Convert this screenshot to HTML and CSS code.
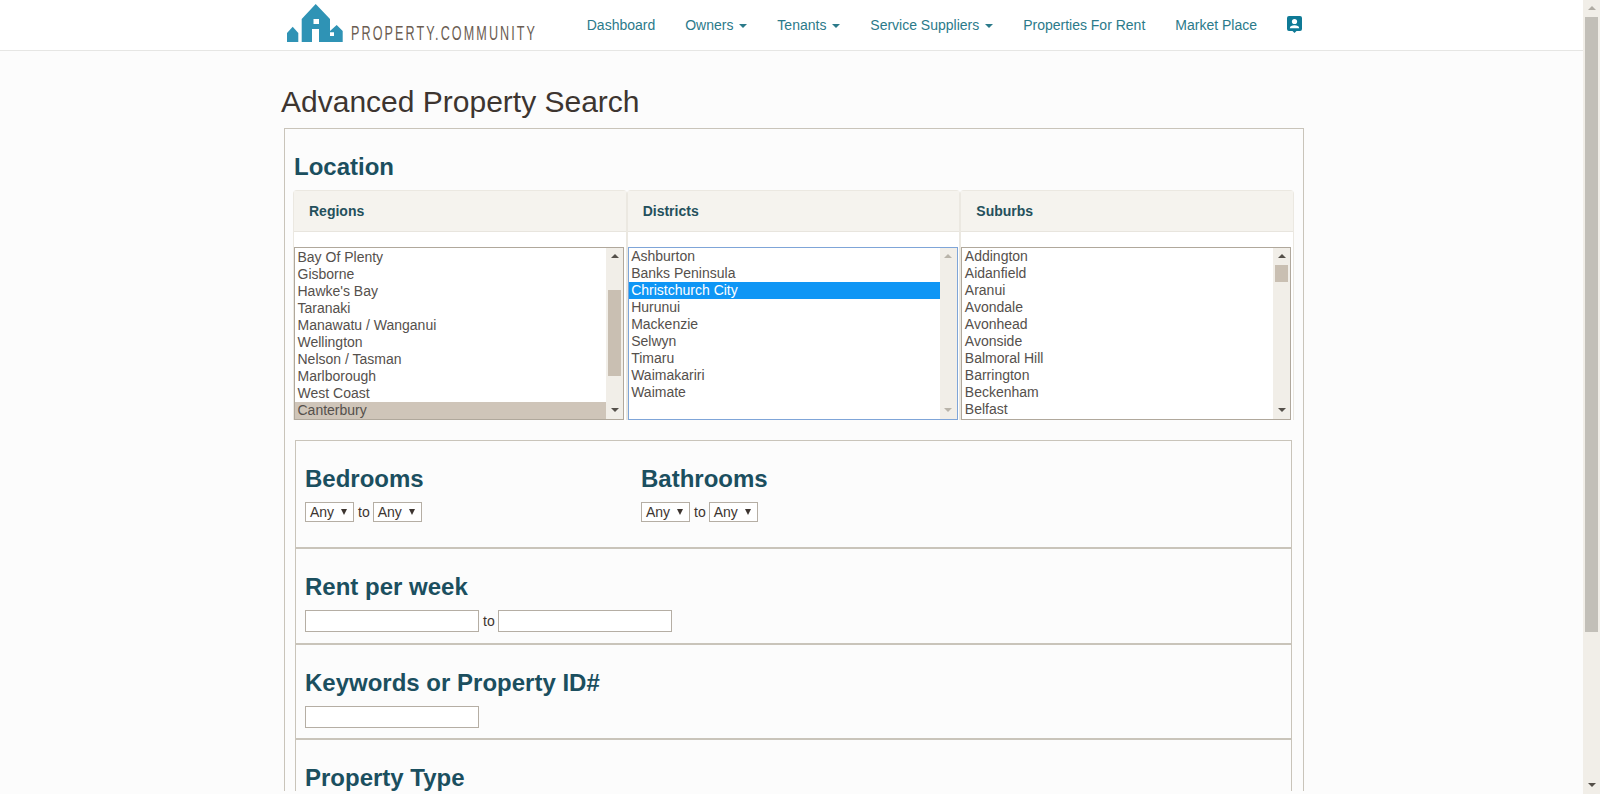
FILE: index.html
```html
<!DOCTYPE html>
<html lang="en">
<head>
    <meta charset="UTF-8">
    <meta name="viewport" content="width=device-width, initial-scale=1.0">
    <title>Advanced Property Search</title>
    <link rel="stylesheet" href="styles.css">
</head>
<body>
    <header class="topbar">
        <div class="wrap topbar-inner">
            <a class="logo" href="#">
                <svg class="logo-mark" viewBox="0 0 56 38" width="56" height="38">
                    <path fill="#2f93b5" fill-rule="evenodd" d="M28.7 0L43 15V38H32V25H25V38H14.7V15ZM26.5 15V20H32V15Z"/>
                    <path fill="#2f93b5" fill-rule="evenodd" d="M49.7 21L55.7 27V38H43V27ZM43 28.3V32H47V28.3Z"/>
                    <path fill="#2f93b5" d="M0 38V29L5.7 22.7L11.3 29V38Z"/>
                </svg>
                <span class="logo-text">PROPERTY.COMMUNITY</span>
            </a>
            <ul class="menu">
                <li><a href="#">Dashboard</a></li>
                <li><a href="#">Owners <i class="caret"></i></a></li>
                <li><a href="#">Tenants <i class="caret"></i></a></li>
                <li><a href="#">Service Suppliers <i class="caret"></i></a></li>
                <li><a href="#">Properties For Rent</a></li>
                <li><a href="#">Market Place</a></li>
                <li class="menu-icon">
                    <a href="#">
                        <svg viewBox="0 0 15 17" width="15" height="17">
                            <path fill="#0f7a96" d="M2 0H13A2 2 0 0 1 15 2V13A2 2 0 0 1 13 15H9.5L7.5 17L5.5 15H2A2 2 0 0 1 0 13V2A2 2 0 0 1 2 0Z"/>
                            <circle fill="#fff" cx="7.5" cy="5.5" r="2.6"/>
                            <path fill="#fff" d="M2.8 12.2C2.8 10 5 9.2 7.5 9.2S12.2 10 12.2 12.2Z"/>
                        </svg>
                    </a>
                </li>
            </ul>
        </div>
    </header>

    <main class="wrap">
        <h1 class="page-title">Advanced Property Search</h1>

        <form class="search-panel">
            <h3 class="location-title">Location</h3>
            <div class="location-cols">
                <div class="loc-col">
                    <div class="loc-head">Regions</div>
                    <div class="loc-body">
                        <div class="listbox">
                            <ul class="options options-scrolled">
                                <li>Bay Of Plenty</li>
                                <li>Gisborne</li>
                                <li>Hawke's Bay</li>
                                <li>Taranaki</li>
                                <li>Manawatu / Wanganui</li>
                                <li>Wellington</li>
                                <li>Nelson / Tasman</li>
                                <li>Marlborough</li>
                                <li>West Coast</li>
                                <li class="picked">Canterbury</li>
                            </ul>
                            <div class="scroll">
                                <span class="scroll-btn up"></span>
                                <span class="scroll-track"><span class="thumb" style="margin-top:25px;height:86px"></span></span>
                                <span class="scroll-btn down"></span>
                            </div>
                        </div>
                    </div>
                </div>
                <div class="loc-col">
                    <div class="loc-head">Districts</div>
                    <div class="loc-body">
                        <div class="listbox focused">
                            <ul class="options">
                                <li>Ashburton</li>
                                <li>Banks Peninsula</li>
                                <li class="active">Christchurch City</li>
                                <li>Hurunui</li>
                                <li>Mackenzie</li>
                                <li>Selwyn</li>
                                <li>Timaru</li>
                                <li>Waimakariri</li>
                                <li>Waimate</li>
                            </ul>
                            <div class="scroll disabled">
                                <span class="scroll-btn up"></span>
                                <span class="scroll-track"></span>
                                <span class="scroll-btn down"></span>
                            </div>
                        </div>
                    </div>
                </div>
                <div class="loc-col">
                    <div class="loc-head">Suburbs</div>
                    <div class="loc-body">
                        <div class="listbox">
                            <ul class="options">
                                <li>Addington</li>
                                <li>Aidanfield</li>
                                <li>Aranui</li>
                                <li>Avondale</li>
                                <li>Avonhead</li>
                                <li>Avonside</li>
                                <li>Balmoral Hill</li>
                                <li>Barrington</li>
                                <li>Beckenham</li>
                                <li>Belfast</li>
                            </ul>
                            <div class="scroll">
                                <span class="scroll-btn up"></span>
                                <span class="scroll-track"><span class="thumb" style="height:17px"></span></span>
                                <span class="scroll-btn down"></span>
                            </div>
                        </div>
                    </div>
                </div>
            </div>

            <div class="filters">
                <section class="filter filter-rooms">
                    <div class="room-col">
                        <h3>Bedrooms</h3>
                        <div class="field-row">
                            <span class="drop">Any</span><span class="to">to</span><span class="drop">Any</span>
                        </div>
                    </div>
                    <div class="room-col">
                        <h3>Bathrooms</h3>
                        <div class="field-row">
                            <span class="drop">Any</span><span class="to">to</span><span class="drop">Any</span>
                        </div>
                    </div>
                </section>
                <section class="filter filter-rent">
                    <h3>Rent per week</h3>
                    <div class="field-row">
                        <input type="text"><span class="to">to</span><input type="text">
                    </div>
                </section>
                <section class="filter filter-keywords">
                    <h3>Keywords or Property ID#</h3>
                    <div class="field-row">
                        <input type="text">
                    </div>
                </section>
                <section class="filter">
                    <h3>Property Type</h3>
                </section>
            </div>
        </form>
    </main>

    <div class="scroll page-scroll">
        <span class="scroll-btn up"></span>
        <span class="scroll-track"><span class="thumb" style="height:615px"></span></span>
        <span class="scroll-btn down"></span>
    </div>
</body>
</html>
```

FILE: styles.css
```css
html, body {
    height: 794px;
    overflow: hidden;
}
body {
    margin: 0;
    padding-right: 17px;
    background-color: #fcfcfc;
    color: #3d3530;
    font-family: "Liberation Sans", Arial, sans-serif;
    font-size: 14px;
}
a {
    color: inherit;
    text-decoration: none;
}
ul {
    margin: 0;
    padding: 0;
    list-style: none;
}
h3 {
    margin: 0 0 10px;
    color: #1b4f5f;
    font-size: 24px;
    font-weight: bold;
    line-height: 26px;
}
.wrap {
    width: 1041px;
    margin: 0 auto;
}

/* top bar */
.topbar {
    height: 50px;
    background-color: #fff;
    border-bottom: 1px solid #e6e6e4;
}
.topbar-inner {
    display: flex;
    align-items: flex-start;
    height: 50px;
}
.logo {
    display: flex;
    align-items: flex-end;
    flex: none;
    margin: 4px 0 0 16px;
    height: 38px;
}
.logo-text {
    width: 183px;
    margin-left: 8px;
    color: #6b5d52;
    font-size: 20px;
    line-height: 17px;
    letter-spacing: 3.3px;
    white-space: nowrap;
    transform: scaleX(0.63);
    transform-origin: left center;
}
.menu {
    display: flex;
    flex: none;
    margin-left: auto;
    margin-right: 10px;
    color: #2b7a8a;
    line-height: 50px;
    white-space: nowrap;
}
.menu a {
    display: block;
    padding: 0 15px;
}
.menu-icon a {
    padding-right: 0;
    height: 50px;
}
.menu-icon svg {
    display: block;
    margin-top: 16px;
}
.caret {
    display: inline-block;
    margin-left: 2px;
    vertical-align: middle;
    border-top: 4px solid #2b7a8a;
    border-left: 4px solid transparent;
    border-right: 4px solid transparent;
}

/* title */
.page-title {
    margin: 34px 0 10px 10px;
    font-size: 30px;
    font-weight: normal;
    line-height: 33px;
}

/* search panel */
.search-panel {
    width: 1020px;
    box-sizing: border-box;
    margin-left: 13px;
    padding: 25px 9px 0 8px;
    border: 1px solid #c9c4ba;
    border-bottom: 0;
}
.location-title {
    margin-left: 1px;
}
.location-cols {
    display: grid;
    grid-template-columns: repeat(3, 1fr);
}
.loc-col {
    border: 1px solid #ebe8e1;
    border-bottom: 0;
    border-radius: 4px 4px 0 0;
    background-color: #fff;
}
.loc-head {
    height: 40px;
    padding-left: 15px;
    background-color: #f5f3ee;
    border-bottom: 1px solid #e8e5de;
    color: #24505c;
    font-weight: bold;
    line-height: 40px;
}
.loc-body {
    padding-top: 15px;
}
.listbox {
    display: flex;
    width: 330px;
    height: 173px;
    box-sizing: border-box;
    border: 1px solid #b0a89c;
    background-color: #fff;
    overflow: hidden;
}
.listbox.focused {
    border-color: #7fa5d8;
}
.options {
    flex: 1;
    color: #55504c;
    line-height: 17px;
}
.options-scrolled {
    padding-top: 1px;
}
.options li {
    height: 17px;
    padding: 0 2.5px;
}
.options .picked {
    background-color: #cfc5b9;
}
.options .active {
    background-color: #0f96f5;
    color: #fff;
}

/* hand drawn scrollbars */
.scroll {
    display: flex;
    flex-direction: column;
    width: 17px;
    background-color: #f1eee8;
}
.scroll-btn {
    position: relative;
    height: 17px;
    flex: none;
}
.scroll-btn::after {
    content: "";
    position: absolute;
    left: 4.5px;
    top: 6px;
    border-left: 4px solid transparent;
    border-right: 4px solid transparent;
}
.scroll-btn.up::after {
    border-bottom: 4px solid #55504a;
}
.scroll-btn.down::after {
    border-top: 4px solid #55504a;
}
.scroll.disabled .scroll-btn.up::after {
    border-bottom-color: #b9b4aa;
}
.scroll.disabled .scroll-btn.down::after {
    border-top-color: #b9b4aa;
}
.scroll-track {
    flex: 1;
    display: block;
}
.thumb {
    display: block;
    margin: 0 2px;
    background-color: #c9bfb2;
}
.page-scroll {
    position: fixed;
    top: 0;
    right: 0;
    bottom: 0;
}
.page-scroll .scroll-btn.up::after {
    border-bottom-color: #b0aca4;
}
.page-scroll .thumb {
    background-color: #c2bfb8;
}

/* filters */
.filters {
    width: 997px;
    box-sizing: border-box;
    margin: 20px 0 0 2px;
    border: 1px solid #c9c4ba;
    border-bottom: 0;
}
.filter {
    padding: 25px 9px 0;
    border-top: 2px solid #c9c4ba;
}
.filter:first-child {
    border-top: 0;
}
.filter-rooms {
    display: grid;
    grid-template-columns: 336px 1fr;
    padding-bottom: 25px;
}
.filter-rent {
    padding-bottom: 11px;
}
.filter-keywords {
    padding-bottom: 10px;
}
.field-row {
    display: flex;
    align-items: center;
}
.to {
    margin: 0 3px 0 4px;
}
.drop {
    position: relative;
    width: 49px;
    height: 20px;
    box-sizing: border-box;
    padding-left: 4px;
    border: 1px solid #b5aea4;
    background-color: #fff;
    line-height: 18px;
}
.drop::after {
    content: "";
    position: absolute;
    right: 6px;
    top: 6px;
    border-top: 6px solid #3d3530;
    border-left: 3px solid transparent;
    border-right: 3px solid transparent;
}
input {
    width: 174px;
    height: 22px;
    box-sizing: border-box;
    margin: 0;
    padding: 0 4px;
    border: 1px solid #b5aea4;
    background-color: #fff;
}
```
